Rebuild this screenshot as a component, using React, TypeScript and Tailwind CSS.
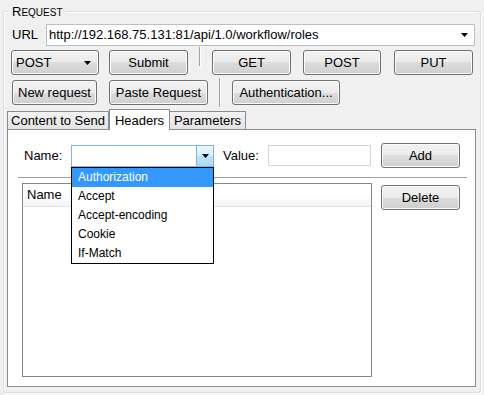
import React from "react";

const btnBase =
  "flex items-center h-[25px] rounded-[3px] border border-[#707070] bg-[linear-gradient(#f2f2f2_0%,#ebebeb_50%,#dddddd_50%,#cfcfcf_100%)] shadow-[inset_0_0_0_1px_#fbfbfb] text-[13px] text-black";
const btn = `${btnBase} justify-center`;

const Arrow = () => (
  <svg width="7" height="4" viewBox="0 0 7 4">
    <polygon points="0,0 7,0 3.5,4" fill="#000" />
  </svg>
);

const Sep = ({ h }: { h: string }) => (
  <div className={`w-px bg-[#a0a0a0] shadow-[1px_0_0_#ffffff] ${h}`} />
);

const headerNames = ["Authorization", "Accept", "Accept-encoding", "Cookie", "If-Match"];

export default function App() {
  return (
    <div className="w-[484px] h-[395px] bg-[#f0f0f0] pt-[11px] pl-[3px] font-['Liberation_Sans',Arial,sans-serif] text-[13px] text-black">
      <div className="relative w-[478px] h-[382px] rounded-[3px] border border-[#d5dfe5] shadow-[inset_1px_1px_0_#ffffff,1px_1px_0_#ffffff] flex flex-col">
        <div className="absolute left-[5px] top-[-8px] px-[3px] bg-[#f0f0f0] leading-[15px]">
          <span>R</span>
          <span className="text-[10px]">EQUEST</span>
        </div>

        {/* URL */}
        <div className="mt-[12px] flex items-center pl-[8px]">
          <span className="w-[34px]">URL</span>
          <div className="w-[429px] h-[22px] border border-[#b9c0c8] bg-white flex items-center pl-[2px] pr-[6px]">
            <span className="flex-1">http://192.168.75.131:81/api/1.0/workflow/roles</span>
            <Arrow />
          </div>
        </div>

        {/* method row */}
        <div className="mt-[4px] flex items-start h-[25px] pl-[7px]">
          <div className={`${btnBase} w-[88px] justify-between pl-[4px] pr-[7px]`}>
            <span>POST</span>
            <Arrow />
          </div>
          <div className={`${btn} w-[79px] ml-[10px]`}>Submit</div>
          <div className="ml-[11px] -mt-[3px]">
            <Sep h="h-[19px]" />
          </div>
          <div className={`${btn} w-[79px] ml-[12px]`}>GET</div>
          <div className={`${btn} w-[78px] ml-[12px]`}>POST</div>
          <div className={`${btn} w-[79px] ml-[13px]`}>PUT</div>
        </div>

        {/* action row */}
        <div className="mt-[5px] flex items-start h-[25px] pl-[8px]">
          <div className={`${btn} w-[85px]`}>New request</div>
          <div className={`${btn} w-[99px] ml-[12px]`}>Paste Request</div>
          <div className="ml-[11px] -mt-[2px]">
            <Sep h="h-[29px]" />
          </div>
          <div className={`${btn} w-[108px] ml-[12px]`}>Authentication...</div>
        </div>

        {/* tabs */}
        <div className="mt-[3px] flex items-end h-[21px] pl-[3px]">
          <div className="w-[102px] h-[18px] border border-b-0 border-[#898c95] bg-[linear-gradient(#f3f3f3,#e3e3e3)] flex items-center justify-center">
            Content to Send
          </div>
          <div className="relative z-10 w-[61px] h-[21px] -mb-px border border-b-0 border-[#898c95] bg-white flex items-start justify-center pt-[1px]">
            Headers
          </div>
          <div className="w-[76px] h-[18px] border border-b-0 border-l-0 border-[#898c95] bg-[linear-gradient(#f3f3f3,#e3e3e3)] flex items-center justify-center">
            Parameters
          </div>
        </div>

        <div className="ml-[3px] w-[469px] h-[258px] border border-[#898c95] bg-white flex flex-col">
          {/* name / value row */}
          <div className="mt-[13px] h-[25px] flex items-center pl-[16px]">
            <span className="w-[47px]">Name:</span>
            <div className="relative w-[143px] h-[22px] border border-[#7eb4ea] bg-white flex">
              <div className="flex-1" />
              <div className="w-[17px] h-full border-l border-[#7eb4ea] bg-[linear-gradient(#eaf6fd,#d9f0fc_50%,#bee6fd_50%,#a7d9f5)] flex items-center justify-center">
                <Arrow />
              </div>
              <div className="absolute z-20 left-[-1px] top-[21px] w-[143px] border border-black bg-white text-[12px]">
                {headerNames.map((n, i) => (
                  <div
                    key={n}
                    className={`h-[19px] flex items-center pl-[6px] ${i === 0 ? "bg-[#3399ff] text-white" : "text-black"}`}
                  >
                    {n}
                  </div>
                ))}
              </div>
            </div>
            <span className="w-[45px] ml-[9px]">Value:</span>
            <div className="w-[103px] h-[21px] border border-[#cdd6e0] bg-white" />
            <div className={`${btn} w-[79px] ml-[10px]`}>Add</div>
          </div>

          <div className="mt-[9px] ml-[10px] w-[449px] h-px bg-[#a0a0a0] shadow-[0_1px_0_#ffffff]" />

          {/* list */}
          <div className="mt-[5px] flex items-start">
            <div className="ml-[14px] w-[350px] h-[194px] border border-[#828790] bg-white">
              <div className="h-[23px] border-b border-[#e5e5e5] bg-[linear-gradient(#ffffff,#ffffff_50%,#f3f4f6)] flex items-center pl-[4px]">
                Name
              </div>
            </div>
            <div className={`${btn} w-[79px] ml-[9px] mt-[2px]`}>Delete</div>
          </div>
        </div>
      </div>
    </div>
  );
}
